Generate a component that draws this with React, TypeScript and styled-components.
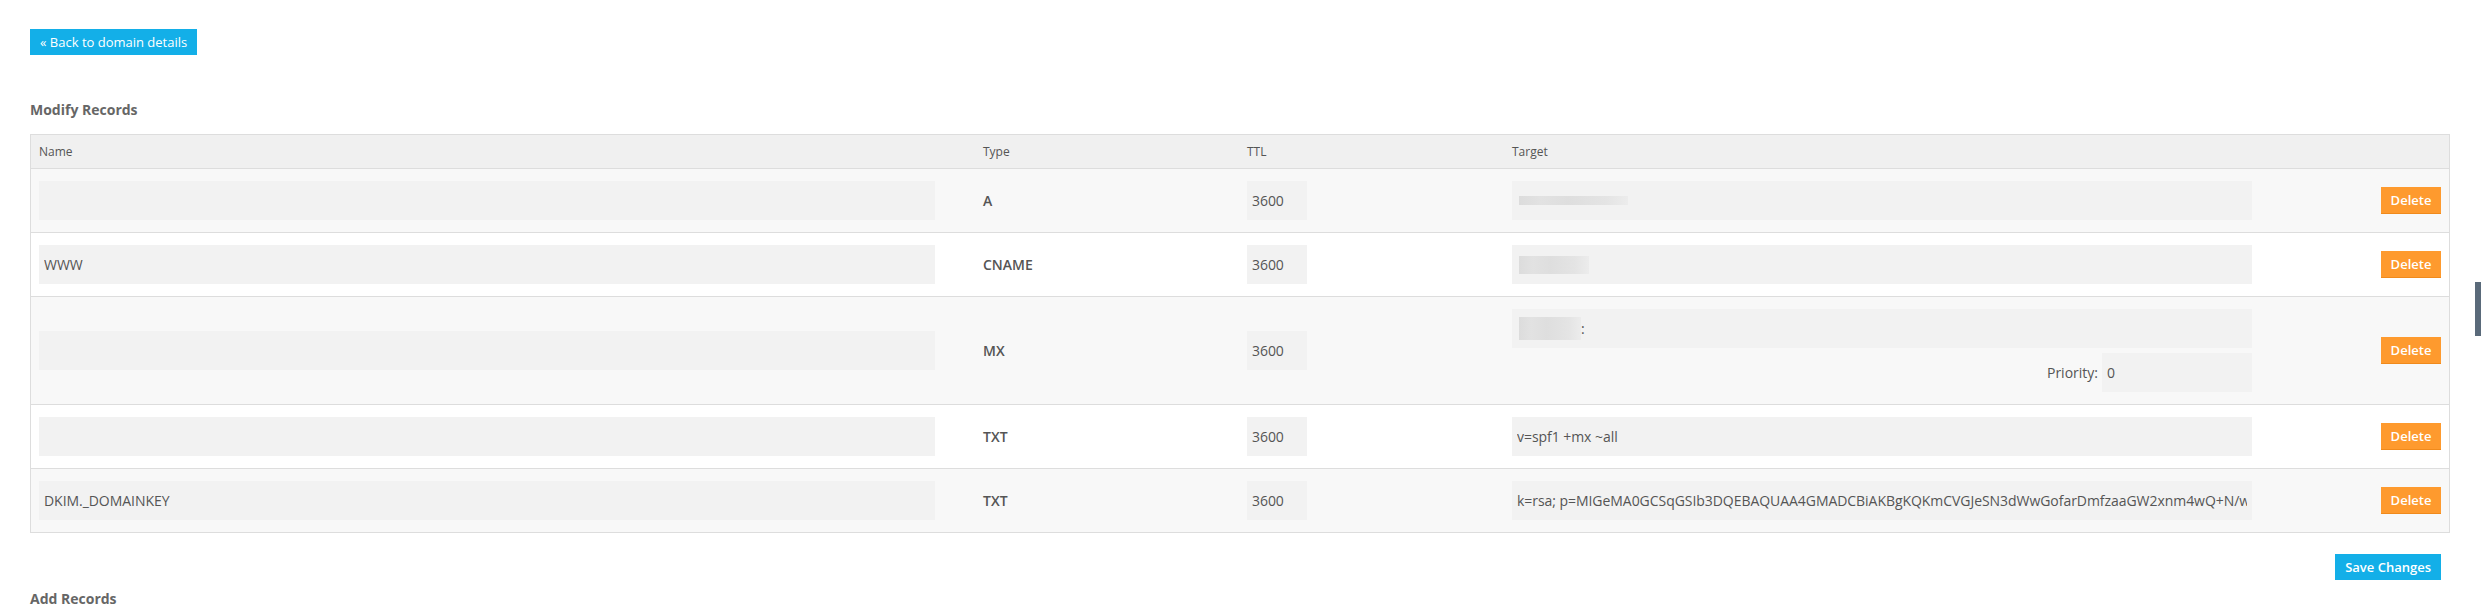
import React from "react";
import styled, { createGlobalStyle } from "styled-components";

const Global = createGlobalStyle`
  html, body { margin: 0; padding: 0; background: #fff; }
  body { font-family: "Open Sans", "Liberation Sans", Arial, sans-serif; color: #555; }
  * { box-sizing: border-box; }
`;

const Page = styled.div`
  padding: 29px 31px 0 30px;
  width: 2481px;
  height: 605px;
  overflow: hidden;
  position: relative;
`;

const BlueButton = styled.button<{ $bold?: boolean }>`
  height: 26px;
  padding: 0 10px;
  border: none;
  background: #13afe8;
  color: #fff;
  font-family: inherit;
  font-size: 13px;
  font-weight: ${(p) => (p.$bold ? 600 : 400)};
  cursor: pointer;
  line-height: 26px;
`;

const SectionTitle = styled.h3<{ $top: number }>`
  margin: ${(p) => p.$top}px 0 0;
  font-size: 14px;
  font-weight: 700;
  color: #666;
  line-height: 20px;
`;

const Table = styled.div`
  margin-top: 14px;
  border: 1px solid #ddd;
`;

const Cols = `
  display: grid;
  grid-template-columns: 944px 264px 265px 760px 1fr;
  align-items: center;
`;

const HeadRow = styled.div`
  ${Cols}
  height: 34px;
  background: #f0f0f0;
  border-bottom: 1px solid #ddd;
  font-size: 12px;
  color: #555;
`;

const HeadCell = styled.div`
  padding: 0 8px;
`;

const Row = styled.div<{ $alt: boolean }>`
  ${Cols}
  background: ${(p) => (p.$alt ? "#f8f8f8" : "#fff")};
  border-bottom: 1px solid #ddd;
  padding: 12px 0;
  &:last-child { border-bottom: none; }
`;

const Cell = styled.div<{ $end?: boolean }>`
  padding: 0 8px;
  display: flex;
  flex-direction: column;
  align-items: ${(p) => (p.$end ? "flex-end" : "stretch")};
  gap: 5px;
`;

const TypeText = styled.span`
  font-size: 14px;
  font-weight: 600;
  color: #555;
`;

const Field = styled.input<{ $w: number }>`
  width: ${(p) => p.$w}px;
  height: 39px;
  border: none;
  background: #f2f2f2;
  padding: 0 5px;
  font-family: inherit;
  font-size: 14px;
  letter-spacing: -0.05px;
  color: #555;
  outline: none;
`;

const FieldBox = styled.div<{ $w: number }>`
  width: ${(p) => p.$w}px;
  height: 39px;
  background: #f2f2f2;
  padding: 0 5px 0 7px;
  display: flex;
  align-items: center;
  font-size: 14px;
  color: #555;
`;

const Redact = styled.span<{ $w: number; $h: number }>`
  display: inline-block;
  width: ${(p) => p.$w}px;
  height: ${(p) => p.$h}px;
  background: linear-gradient(90deg, #dcdcdc 0%, #e2e2e2 20%, #dedede 45%, #e4e4e4 80%, #ececec 100%);
`;

const PriorityLine = styled.div`
  display: flex;
  align-items: center;
  justify-content: flex-end;
  gap: 4px;
  font-size: 14px;
  color: #555;
  width: 740px;
`;

const DeleteButton = styled.button`
  width: 60px;
  height: 27px;
  border: none;
  border-bottom: 1px solid #f08a1c;
  background: #fe9a2e;
  color: #fff;
  font-family: inherit;
  font-size: 13px;
  font-weight: 600;
  padding: 0;
  cursor: pointer;
`;

const Actions = styled.div`
  display: flex;
  justify-content: flex-end;
  padding-right: 9px;
  margin-top: 21px;
`;

const SideTab = styled.div`
  position: absolute;
  right: 0;
  top: 282px;
  width: 6px;
  height: 54px;
  background: #5a6a7a;
`;

type Rec = {
  name: string;
  type: string;
  target?: string;
  redact?: [number, number];
  mx?: boolean;
};

const records: Rec[] = [
  { name: "", type: "A", redact: [109, 9] },
  { name: "WWW", type: "CNAME", redact: [70, 18] },
  { name: "", type: "MX", redact: [62, 23], mx: true },
  { name: "", type: "TXT", target: "v=spf1 +mx ~all" },
  {
    name: "DKIM._DOMAINKEY",
    type: "TXT",
    target:
      "k=rsa; p=MIGeMA0GCSqGSIb3DQEBAQUAA4GMADCBiAKBgKQKmCVGJeSN3dWwGofarDmfzaaGW2xnm4wQ+N/w",
  },
];

export default function App() {
  return (
    <>
      <Global />
      <Page>
        <BlueButton>« Back to domain details</BlueButton>
        <SectionTitle $top={45}>Modify Records</SectionTitle>
        <Table>
          <HeadRow>
            <HeadCell>Name</HeadCell>
            <HeadCell>Type</HeadCell>
            <HeadCell>TTL</HeadCell>
            <HeadCell>Target</HeadCell>
            <HeadCell />
          </HeadRow>
          {records.map((r, i) => (
            <Row key={i} $alt={i % 2 === 0}>
              <Cell>
                <Field $w={896} defaultValue={r.name} />
              </Cell>
              <Cell>
                <TypeText>{r.type}</TypeText>
              </Cell>
              <Cell>
                <Field $w={60} defaultValue="3600" />
              </Cell>
              <Cell>
                {r.redact ? (
                  <FieldBox $w={740}>
                    <Redact $w={r.redact[0]} $h={r.redact[1]} />
                    {r.mx ? ":" : ""}
                  </FieldBox>
                ) : (
                  <Field $w={740} defaultValue={r.target} />
                )}
                {r.mx && (
                  <PriorityLine>
                    Priority:
                    <Field $w={150} defaultValue="0" />
                  </PriorityLine>
                )}
              </Cell>
              <Cell $end>
                <DeleteButton>Delete</DeleteButton>
              </Cell>
            </Row>
          ))}
        </Table>
        <Actions>
          <BlueButton $bold>Save Changes</BlueButton>
        </Actions>
        <SectionTitle $top={9}>Add Records</SectionTitle>
        <SideTab />
      </Page>
    </>
  );
}
